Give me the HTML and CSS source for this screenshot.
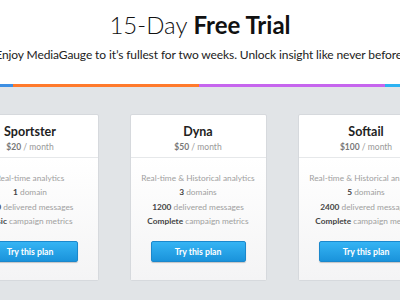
FILE: index.html
```html
<!DOCTYPE html>
<html>
<head>
    <title>15-Day Free Trial</title>
    <link rel="stylesheet" href="styles.css">
</head>
<body>
    <div class="header">
        <h1 class="title">15-Day <strong>Free Trial</strong></h1>
        <p class="subtitle">Enjoy MediaGauge to it’s fullest for two weeks. Unlock insight like never before.</p>
    </div>
    <div class="stripe">
        <span class="stripe-blue"></span>
        <span class="stripe-orange"></span>
        <span class="stripe-purple"></span>
        <span class="stripe-sky"></span>
    </div>

    <div class="plans">
        <div class="plan">
            <div class="plan-head">
                <h2 class="plan-name">Sportster</h2>
                <div class="plan-price"><b>$20</b> / month</div>
            </div>
            <div class="plan-body">
                <ul class="feature-list">
                    <li>Real-time analytics</li>
                    <li><b>1</b> domain</li>
                    <li><b>600</b> delivered messages</li>
                    <li><b>Basic</b> campaign metrics</li>
                </ul>
                <button class="plan-button">Try this plan</button>
            </div>
        </div>
        <div class="plan">
            <div class="plan-head">
                <h2 class="plan-name">Dyna</h2>
                <div class="plan-price"><b>$50</b> / month</div>
            </div>
            <div class="plan-body">
                <ul class="feature-list">
                    <li>Real-time &amp; Historical analytics</li>
                    <li><b>3</b> domains</li>
                    <li><b>1200</b> delivered messages</li>
                    <li><b>Complete</b> campaign metrics</li>
                </ul>
                <button class="plan-button">Try this plan</button>
            </div>
        </div>
        <div class="plan">
            <div class="plan-head">
                <h2 class="plan-name">Softail</h2>
                <div class="plan-price"><b>$100</b> / month</div>
            </div>
            <div class="plan-body">
                <ul class="feature-list">
                    <li>Real-time &amp; Historical analytics</li>
                    <li><b>5</b> domains</li>
                    <li><b>2400</b> delivered messages</li>
                    <li><b>Complete</b> campaign metrics</li>
                </ul>
                <button class="plan-button">Try this plan</button>
            </div>
        </div>
    </div>
</body>
</html>
```

FILE: styles.css
```css
body {
    margin: 0;
    background-color: #E1E4E7;
    font-family: Lato, "Open Sans", sans-serif;
    overflow: hidden;
}
.header {
    background-color: #FFFFFF;
    height: 84px;
    text-align: center;
    overflow: hidden;
}
.title {
    margin: 10px 0 0;
    font-size: 24px;
    font-weight: 300;
    color: #111111;
    line-height: 30px;
}
.title strong {
    font-weight: 700;
}
.subtitle {
    margin: 7px -200px 0;
    font-size: 12px;
    letter-spacing: -0.1px;
    color: #222222;
    white-space: nowrap;
}
.stripe {
    display: flex;
    height: 3px;
}
.stripe-blue {
    width: 13px;
    background-color: #3D8FE3;
}
.stripe-orange {
    width: 186px;
    background-color: #FF7A2C;
}
.stripe-purple {
    width: 186px;
    background-color: #C665EE;
}
.stripe-sky {
    flex: 1;
    background-color: #2DB2F2;
}
.plans {
    display: flex;
    justify-content: center;
    gap: 31px;
    margin-top: 27px;
    margin-right: 4px;
}
.plan {
    flex: 0 0 135px;
    background-color: #FFFFFF;
    border: 1px solid #D6D9DD;
    border-radius: 2px;
    text-align: center;
}
.plan-head {
    height: 43px;
    border-bottom: 1px solid #E6E8EA;
    padding-top: 1px;
    box-sizing: border-box;
}
.plan-name {
    margin: 8px 0 0;
    font-size: 12.5px;
    font-weight: 700;
    color: #222222;
}
.plan-price {
    margin-top: 3px;
    font-size: 8.5px;
    color: #999999;
}
.plan-price b {
    color: #777777;
    font-weight: 700;
}
.plan-body {
    height: 122px;
    background: linear-gradient(#FFFFFF, #F4F4F5);
    padding-top: 13px;
    box-sizing: border-box;
}
.feature-list {
    list-style-type: none;
    margin: 0;
    padding: 0;
    font-size: 8.3px;
    color: #A0A0A0;
    white-space: nowrap;
}
.feature-list li {
    height: 14.3px;
    line-height: 14px;
}
.feature-list b {
    color: #444444;
    font-weight: 700;
}
.plan-button {
    margin-top: 13px;
    width: 95px;
    height: 21px;
    border: 1px solid #1B88CC;
    border-radius: 2px;
    background: linear-gradient(#35B4F4, #1A93DB);
    color: #FFFFFF;
    font-family: Lato, sans-serif;
    font-size: 8.7px;
    font-weight: 700;
    box-shadow: 0 1px 1px rgba(0, 0, 0, 0.2);
}
```
